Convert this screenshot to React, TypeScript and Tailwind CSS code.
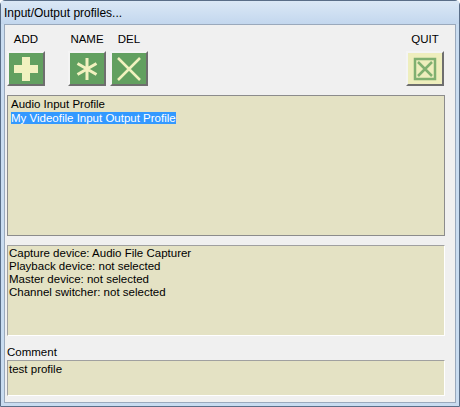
export default function App() {
  const font = { fontFamily: '"Liberation Sans", Arial, sans-serif' };
  const Btn = ({ children, pale }: { children: React.ReactNode; pale?: boolean }) => (
    <div className={`w-[38px] h-[35px] flex items-center justify-center border-t-2 border-l-2 border-t-[#f4f4f4] border-l-[#f4f4f4] border-b-2 border-r-2 border-b-[#6e6e6e] border-r-[#6e6e6e] ${pale ? "bg-[#eeeebd]" : "bg-[#62a060]"}`}>
      {children}
    </div>
  );
  return (
    <div className="w-[460px] h-[407px] bg-[#c9dcf0] border border-[#5a6e88] rounded-t-[5px] flex flex-col text-[11.5px] text-black" style={font}>
      <div className="h-[23px] flex items-center pl-[3px] bg-gradient-to-b from-[#dbe8f6] to-[#c3d7ee] text-[12px]">Input/Output profiles...</div>
      <div className="flex-1 mx-[3px] mb-[3px] bg-[#f0f0f0] border border-[#9aa9bc] flex flex-col pl-[1px] pr-[2px] pt-[9px]">
        <div className="flex items-end h-[52px]">
          <div className="flex flex-col items-center w-[40px]">
            <span className="mb-[3px]">ADD</span>
            <Btn>
              <svg width="26" height="26" viewBox="0 0 26 26"><path d="M9 1h8v8h8v8h-8v8H9v-8H1V9h8z" fill="#f1f1bf" /></svg>
            </Btn>
          </div>
          <div className="flex flex-col items-center w-[38px] ml-[22px]">
            <span className="mb-[3px]">NAME</span>
            <Btn>
              <svg width="26" height="26" viewBox="0 0 26 26" stroke="#f1f1bf" strokeWidth="3" strokeLinecap="butt"><path d="M13 2v22M3.5 7.5l19 11M3.5 18.5l19-11" /></svg>
            </Btn>
          </div>
          <div className="flex flex-col items-center w-[38px] ml-[4px]">
            <span className="mb-[3px]">DEL</span>
            <Btn>
              <svg width="28" height="28" viewBox="0 0 28 28" stroke="#f1f1bf" strokeWidth="2.5"><path d="M3 3l22 22M25 3L3 25" /></svg>
            </Btn>
          </div>
          <div className="flex-1" />
          <div className="flex flex-col items-center w-[38px] mr-[9px]">
            <span className="mb-[3px]">QUIT</span>
            <Btn pale>
              <svg width="24" height="24" viewBox="0 0 24 24" fill="none" stroke="#80b070" strokeWidth="2.5"><rect x="2" y="2" width="20" height="20" /><path d="M5 5l14 14M19 5L5 19" /></svg>
            </Btn>
          </div>
        </div>
        <div className="mt-[9px] ml-[1px] mr-[8px] h-[141px] bg-[#e4e2c4] border border-[#8c8c8c] px-[3px] pt-[1px] leading-[14px]">
          <div>Audio Input Profile</div>
          <div><span className="bg-[#3399ff] text-white">My Videofile Input Output Profile</span></div>
        </div>
        <div className="mt-[9px] ml-[1px] mr-[8px] h-[91px] bg-[#e4e2c4] border border-t-[#a0a0a0] border-l-[#a0a0a0] border-b-white border-r-white px-[1px] pt-[1px] leading-[13px]">
          <div>Capture device: Audio File Capturer</div>
          <div>Playback device: not selected</div>
          <div>Master device: not selected</div>
          <div>Channel switcher: not selected</div>
        </div>
        <div className="mt-[9px] ml-[1px] leading-[14px]">Comment</div>
        <div className="mt-[1px] ml-[1px] mr-[8px] h-[36px] bg-[#e4e2c4] border border-t-[#a0a0a0] border-l-[#a0a0a0] border-b-white border-r-white px-[1px] pt-[2px] leading-[13px]">test profile</div>
      </div>
    </div>
  );
}
